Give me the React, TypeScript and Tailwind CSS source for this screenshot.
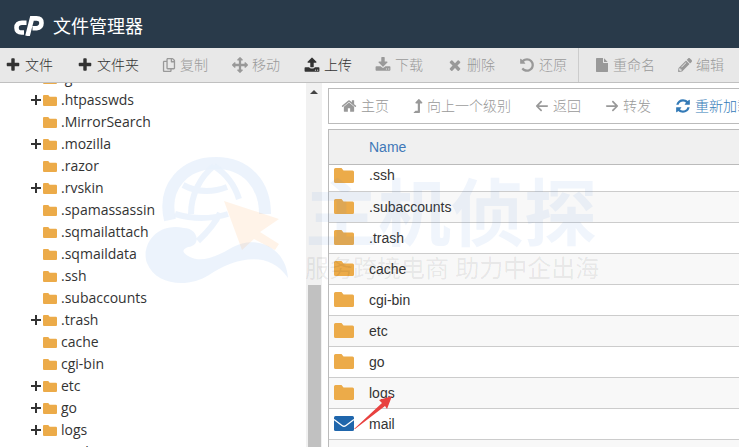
import type { ReactNode } from "react";
import { FaRegCopy, FaLevelUpAlt, FaPencilAlt } from "react-icons/fa";
import { FaArrowLeft, FaArrowRight } from "react-icons/fa6";

const PATHS = {
  plus: "M1600 736v192q0 40-28 68t-68 28h-416v416q0 40-28 68t-68 28h-192q-40 0-68-28t-28-68v-416h-416q-40 0-68-28t-28-68v-192q0-40 28-68t68-28h416v-416q0-40 28-68t68-28h192q40 0 68 28t28 68v416h416q40 0 68 28t28 68z",
  home: "M1472 992v480q0 26-19 45t-45 19h-384v-384h-256v384h-384q-26 0-45-19t-19-45v-480q0-1 .5-3t.5-3l575-474 575 474q1 2 1 6zm223-69l-62 74q-8 9-21 11h-3q-13 0-21-7l-692-577-692 577q-12 8-24 7-13-2-21-11l-62-74q-8-10-7-23.5t11-21.5l719-599q32-26 76-26t76 26l244 204v-195q0-14 9-23t23-9h192q14 0 23 9t9 23v408l219 182q10 8 11 21.5t-7 23.5z",
  upload: "M1344 1472q0-26-19-45t-45-19-45 19-19 45 19 45 45 19 45-19 19-45zm256 0q0-26-19-45t-45-19-45 19-19 45 19 45 45 19 45-19 19-45zm128-224v320q0 40-28 68t-68 28h-1472q-40 0-68-28t-28-68v-320q0-40 28-68t68-28h427q21 56 70.5 92t110.5 36h256q61 0 110.5-36t70.5-92h427q40 0 68 28t28 68zm-325-648q-17 40-59 40h-256v448q0 26-19 45t-45 19h-256q-26 0-45-19t-19-45v-448h-256q-42 0-59-40-17-39 14-69l448-448q18-19 45-19t45 19l448 448q31 30 14 69z",
  download: "M1344 1344q0-26-19-45t-45-19-45 19-19 45 19 45 45 19 45-19 19-45zm256 0q0-26-19-45t-45-19-45 19-19 45 19 45 45 19 45-19 19-45zm128-224v320q0 40-28 68t-68 28h-1472q-40 0-68-28t-28-68v-320q0-40 28-68t68-28h465l135 136q58 56 136 56t136-56l136-136h464q40 0 68 28t28 68zm-325-569q17 41-14 70l-448 448q-18 19-45 19t-45-19l-448-448q-31-29-14-70 17-39 59-39h256v-448q0-26 19-45t45-19h256q26 0 45 19t19 45v448h256q42 0 59 39z",
  times: "M1490 1322q0 40-28 68l-136 136q-28 28-68 28t-68-28l-294-294-294 294q-28 28-68 28t-68-28l-136-136q-28-28-28-68t28-68l294-294-294-294q-28-28-28-68t28-68l136-136q28-28 68-28t68 28l294 294 294-294q28-28 68-28t68 28l136 136q28 28 28 68t-28 68l-294 294 294 294q28 28 28 68z",
  move: "M1792 896q0 26-19 45l-256 256q-19 19-45 19t-45-19-19-45v-128h-384v384h128q26 0 45 19t19 45-19 45l-256 256q-19 19-45 19t-45-19l-256-256q-19-19-19-45t19-45 45-19h128v-384h-384v128q0 26-19 45t-45 19-45-19l-256-256q-19-19-19-45t19-45l256-256q19-19 45-19t45 19 19 45v128h384v-384h-128q-26 0-45-19t-19-45 19-45l256-256q19-19 45-19t45 19l256 256q19 19 19 45t-19 45-45 19h-128v384h384v-128q0-26 19-45t45-19 45 19l256 256q19 19 19 45z",
  undo: "M1664 896q0 156-61 298t-164 245-245 164-298 61q-172 0-327-72.5t-264-204.5q-7-10-6.5-22.5t8.5-20.5l137-138q10-9 25-9 16 2 23 12 73 95 179 147t225 52q104 0 198.5-40.5t163.5-109.5 109.5-163.5 40.5-198.5-40.5-198.5-109.5-163.5-163.5-109.5-198.5-40.5q-98 0-188 35.5t-160 101.5l137 138q31 30 14 69-17 40-59 40h-448q-26 0-45-19t-19-45v-448q0-42 40-59 39-17 69 14l130 129q107-101 244.5-156.5t284.5-55.5q156 0 298 61t245 164 164 245 61 298z",
  refresh: "M1639 1056q0 5-1 7-64 268-268 434.5t-478 166.5q-146 0-282.5-55t-243.5-157l-129 129q-19 19-45 19t-45-19-19-45v-448q0-26 19-45t45-19h448q26 0 45 19t19 45-19 45l-137 137q71 66 161 102t187 36q134 0 250-65t186-179q11-17 53-117 8-23 30-23h192q13 0 22.5 9.5t9.5 22.5zm25-800v448q0 26-19 45t-45 19h-448q-26 0-45-19t-19-45 19-45l138-138q-148-137-349-137-134 0-250 65t-186 179q-11 17-53 117-8 23-30 23h-199q-13 0-22.5-9.5t-9.5-22.5v-7q65-268 270-434.5t480-166.5q146 0 284 55.5t245 156.5l130-129q19-19 45-19t45 19 19 45z",
  file: "M1152 512v-472q22 14 36 28l408 408q14 14 28 36h-472zm-128 32q0 40 28 68t68 28h544v1056q0 40-28 68t-68 28h-1344q-40 0-68-28t-28-68v-1600q0-40 28-68t68-28h800v544z",
};

function Glyph({ name, className = "size-4" }: { name: keyof typeof PATHS; className?: string }) {
  return (
    <svg viewBox="0 0 1792 1792" className={`${className} shrink-0 fill-current`} aria-hidden="true">
      <path d={PATHS[name]} />
    </svg>
  );
}

function Folder({ className }: { className: string }) {
  return (
    <svg viewBox="0 0 20 15" preserveAspectRatio="none" className={`${className} shrink-0 fill-[#ecab49]`} aria-hidden="true">
      <path d="M1.500 0H7.500L9.500 2.500H18.500Q20 2.500 20 4V13.500Q20 15 18.500 15H1.500Q0 15 0 13.500V1.500Q0 0 1.500 0Z" />
    </svg>
  );
}

function Envelope() {
  return (
    <svg viewBox="0 0 20 15" className="h-[15px] w-5 shrink-0" aria-hidden="true">
      <rect width="20" height="15" rx="1.500" fill="#1f66ac" />
      <path d="M0 3.500L8 9.500Q10 11 12 9.500L20 3.500" fill="none" stroke="#fff" strokeWidth="1.300" />
    </svg>
  );
}

function Logo() {
  return (
    <svg viewBox="0 0 30 20" className="h-5 w-[30px] shrink-0" aria-label="cPanel" role="img">
      <g fill="none" stroke="#fff" strokeWidth="4.600">
        <path d="M12.500 6.800H8Q2.500 6.800 2.500 11.700T7.800 16.500H10" />
        <path d="M13.500 20L18 2.400H22.500Q27.500 2.400 27.500 7T22.500 12.300H18.500" />
      </g>
    </svg>
  );
}

type Action = { label: string; icon: ReactNode; width: string; tone?: string; divider?: boolean };

const tools: Action[] = [
  { label: "文件", icon: <Glyph name="plus" />, width: "w-[72px]", tone: "text-[#333]" },
  { label: "文件夹", icon: <Glyph name="plus" />, width: "w-[85px]", tone: "text-[#333]" },
  { label: "复制", icon: <FaRegCopy className="size-[14px] shrink-0" />, width: "w-[70px]" },
  { label: "移动", icon: <Glyph name="move" />, width: "w-[72px]" },
  { label: "上传", icon: <Glyph name="upload" />, width: "w-[71px]", tone: "text-[#333]" },
  { label: "下载", icon: <Glyph name="download" />, width: "w-[72px]" },
  { label: "删除", icon: <Glyph name="times" />, width: "w-[72px]" },
  { label: "还原", icon: <Glyph name="undo" />, width: "w-[60px]", divider: true },
  { label: "重命名", icon: <Glyph name="file" className="size-[14px]" />, width: "w-[83px]" },
  { label: "编辑", icon: <FaPencilAlt className="size-[14px] shrink-0" />, width: "w-[72px]" },
];

const nav: Action[] = [
  { label: "主页", icon: <Glyph name="home" />, width: "w-[72px]" },
  { label: "向上一个级别", icon: <FaLevelUpAlt className="h-[14px] w-[10px] shrink-0" />, width: "w-[122px]" },
  { label: "返回", icon: <FaArrowLeft className="size-[14px] shrink-0" />, width: "w-[70px]" },
  { label: "转发", icon: <FaArrowRight className="size-[14px] shrink-0" />, width: "w-[70px]" },
  { label: "重新加载", icon: <Glyph name="refresh" />, width: "w-[100px]", tone: "text-[#337ab7]" },
];

const tree: [string, boolean][] = [
  [".gem", false],
  [".htpasswds", true],
  [".MirrorSearch", false],
  [".mozilla", true],
  [".razor", false],
  [".rvskin", true],
  [".spamassassin", false],
  [".sqmailattach", false],
  [".sqmaildata", false],
  [".ssh", false],
  [".subaccounts", false],
  [".trash", true],
  ["cache", false],
  ["cgi-bin", false],
  ["etc", true],
  ["go", true],
  ["logs", true],
  ["mail", true],
];

const files = [".ssh", ".subaccounts", ".trash", "cache", "cgi-bin", "etc", "go", "logs", "mail", ""];

function ActionButton({ item }: { item: Action }) {
  return (
    <button
      type="button"
      className={`flex h-full shrink-0 items-center gap-1 text-sm font-light whitespace-nowrap ${item.width} ${item.tone ?? "text-[#999]"} ${item.divider ? "border-r border-[#ccc]" : ""}`}
    >
      {item.icon}
      {item.label}
    </button>
  );
}

function Watermark() {
  return (
    <div className="pointer-events-none absolute top-[156px] left-[144px] flex items-start gap-4" aria-hidden="true">
      <svg viewBox="0 0 145 128" className="h-32 w-[145px] shrink-0">
        <g fill="#e9f1fb" fillOpacity=".85" stroke="none">
          <path d="M44 91C58 90 54 72 40 72C10 66 -3 92 3 107C12 130 45 132 65 119C90 102 125 93 144 122C142 92 113 78 89 91C69 103 56 106 46 101Q34 95 44 91Z" />
        </g>
        <g fill="none" stroke="#e9f1fb" strokeOpacity=".85">
          <path d="M26 64C18 30 41 7 72 7S121 29 121 58" strokeWidth="12" />
          <path d="M70 10C56 21 47 39 47 58M70 10C84 19 91 30 95 43M39 29Q60 40 83 31M31 58Q58 66 84 58M54 85Q70 70 76 57" strokeWidth="6" />
        </g>
        <path d="M80 45L135 63L116 76L135 88L131 94L110 83L98 94Z" fill="#ff8a1e" fillOpacity=".1" />
      </svg>
      <div className="whitespace-nowrap">
        <div className="pt-4 text-[73px] leading-[80px] font-bold text-[#3c82dc]/8">主机侦探</div>
        <div className="text-2xl leading-8 text-black/8">服务跨境电商 助力中企出海</div>
      </div>
    </div>
  );
}

export default function App() {
  return (
    <div className="relative flex h-screen flex-col overflow-hidden bg-white font-['Open_Sans','Noto_Sans_CJK_SC',sans-serif] text-[#333]">
      <header className="flex h-12 shrink-0 items-center gap-[9px] bg-[#293a4a] px-[14px] pt-1 text-white">
        <Logo />
        <h1 className="text-lg leading-6 font-normal">文件管理器</h1>
      </header>

      <nav className="flex h-[35px] shrink-0 overflow-hidden border-b border-[#c0c0c0] bg-[#e8e8e8] pl-[5px]">
        {tools.slice(0, 8).map((t) => (
          <ActionButton key={t.label} item={t} />
        ))}
        <div className="flex pl-4">
          {tools.slice(8).map((t) => (
            <ActionButton key={t.label} item={t} />
          ))}
        </div>
      </nav>

      <div className="flex min-h-0 flex-1">
        <aside className="flex min-w-0 flex-[0_0_322px]">
          <div className="min-w-0 flex-1 overflow-hidden">
            <ul className="-mt-4 pl-[30px] text-sm leading-[22px]">
              {tree.map(([name, expandable]) => (
                <li key={name} className="flex h-[22px] items-center">
                  <span className="flex w-[13px] shrink-0">
                    {expandable && (
                      <svg viewBox="0 0 12 12" className="size-3 stroke-[#333]" aria-hidden="true">
                        <path d="M6 1V11M1 6H11" strokeWidth="2" />
                      </svg>
                    )}
                  </span>
                  <Folder className="h-[11px] w-[14px]" />
                  <span className="pl-1">{name}</span>
                </li>
              ))}
            </ul>
          </div>
          <div className="flex w-4 shrink-0 flex-col items-center bg-[#f1f1f1]">
            <svg viewBox="0 0 8 4" className="mt-[7px] h-1 w-2 fill-[#444]" aria-hidden="true">
              <path d="M0 4L4 0L8 4Z" />
            </svg>
            <div className="mt-[191px] w-[13px] flex-1 bg-[#c1c1c1]" />
          </div>
        </aside>

        <main className="ml-[6px] flex min-w-0 flex-1 flex-col pt-[5px]">
          <div className="flex h-9 shrink-0 overflow-hidden border border-r-0 border-[#bbb] pl-3">
            {nav.map((t) => (
              <ActionButton key={t.label} item={t} />
            ))}
          </div>

          <div className="mt-[5px] flex min-h-0 flex-1 flex-col border-t border-l border-[#bbb] font-['Liberation_Sans',Arial,sans-serif] text-sm">
            <div className="z-10 flex h-[35px] shrink-0 items-center border-b border-[#bbb] bg-[#f0f0f0] pl-10 text-[#4078b8]">Name</div>
            <div className="min-h-0 flex-1 overflow-hidden">
              <table className="-mt-[5px] w-full table-fixed border-collapse">
                <tbody>
                  {files.map((name, i) => (
                    <tr key={name} className="h-[31px] border-b border-[#ccc] odd:bg-white even:bg-[#f8f8f8]">
                      <td className="w-10 p-0 pl-[5px]">
                        {name === "mail" ? <Envelope /> : i < 9 && <Folder className="h-[15px] w-5" />}
                      </td>
                      <td className="p-0">{name}</td>
                    </tr>
                  ))}
                </tbody>
              </table>
            </div>
          </div>
        </main>
      </div>

      <Watermark />

      <svg viewBox="0 0 38 34" className="pointer-events-none absolute top-[396px] left-[354px] h-[34px] w-[38px]" aria-hidden="true">
        <path d="M0 33L28 7L25 4L38 0L33 13L31 10L1 33Z" fill="#e8413f" />
      </svg>
    </div>
  );
}
